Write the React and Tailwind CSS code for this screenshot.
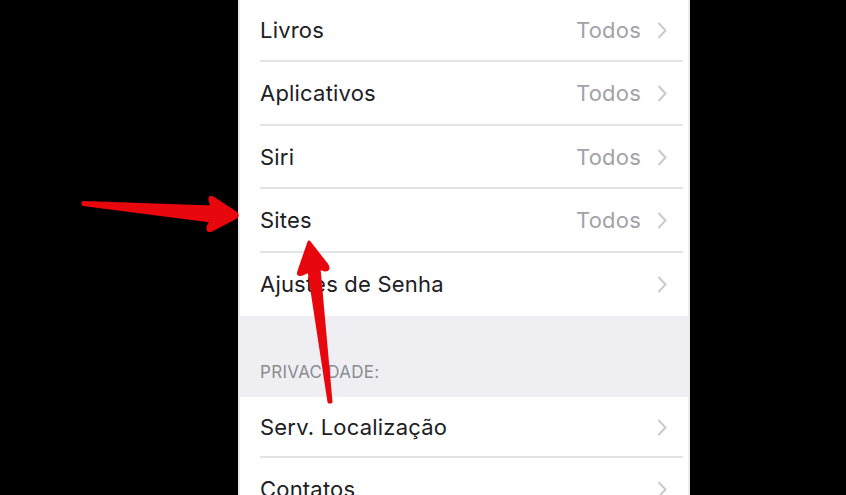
import React from "react";

const Chevron = () => (
  <svg width="10" height="17" viewBox="0 0 10 17" className="ml-[16px]">
    <path d="M2 1.5 L8.5 8.5 L2 15.5" fill="none" stroke="#cbcbcf" strokeWidth="2" strokeLinecap="round" strokeLinejoin="round" />
  </svg>
);

const Row = ({ label, value, sep = true, h = "h-[63.5px]" }) => (
  <div className={`relative flex items-center ${h} pl-[20px] pr-[21px] bg-white`}>
    <span className="flex-1 text-[22px] text-[#202023] tracking-[0.2px]">{label}</span>
    {value && <span className="text-[22px] text-[#a2a2a7] tracking-[0.2px]">{value}</span>}
    <Chevron />
    {sep && <div className="absolute bottom-0 left-[20px] right-[5px] h-[2px] bg-[#e3e3e6]" />}
  </div>
);

export default function App() {
  return (
    <div
      className="relative w-[846px] h-[495px] bg-black overflow-hidden"
      style={{ fontFamily: "Inter, 'Noto Sans', sans-serif" }}
    >
      <div className="ml-[238px] w-[452px] h-full bg-white border-x-2 border-[#ececef] overflow-hidden">
        <div className="-mt-[1.5px]">
          <Row label="Livros" value="Todos" />
          <Row label="Aplicativos" value="Todos" />
          <Row label="Siri" value="Todos" />
          <Row label="Sites" value="Todos" />
          <Row label="Ajustes de Senha" sep={false} />
          <div className="h-[81px] bg-[#efeff3] flex items-end pl-[20px] pb-[12px]">
            <span className="text-[17px] text-[#8b8b90] tracking-[0.3px]">PRIVACIDADE:</span>
          </div>
          <Row label="Serv. Localização" h="h-[61px]" />
          <Row label="Contatos" />
        </div>
      </div>

      <svg className="absolute inset-0 pointer-events-none" width="846" height="495" viewBox="0 0 846 495">
        <g fill="#e8070d" stroke="#e8070d" strokeLinejoin="round" strokeWidth="3">
          <path d="M83 202.5 L212 207 L210 200 Q209 196 213 198 L236 213 Q239 216 235 218 L212 230 Q207 232 208 227 L211 221 L83 204.5 Z" />
          <path d="M309 242 L327 265 Q330 270 325 270 L319 268 L331 402 L329 402 L309 271 L302 274 Q297 276 299 271 Z" />
        </g>
      </svg>
    </div>
  );
}
